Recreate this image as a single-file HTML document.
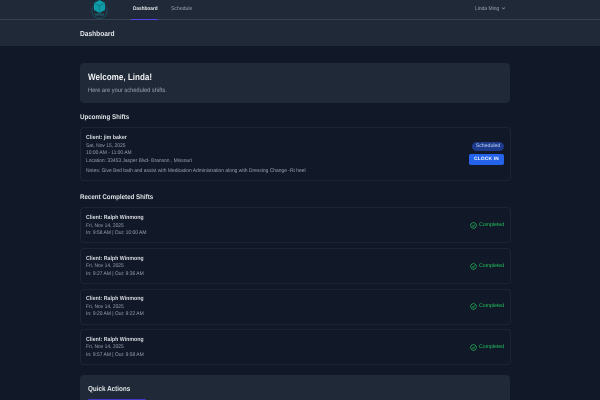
<!DOCTYPE html>
<html><head><meta charset="utf-8"><style>
html,body{margin:0;padding:0;width:600px;height:400px;overflow:hidden;background:#111827}
#p{position:absolute;left:0;top:0;width:600px;height:400px;overflow:hidden;background:#111827;font-family:"Liberation Sans",sans-serif;text-rendering:geometricPrecision}
#p div,#p span{position:absolute;white-space:nowrap}
.card{left:80px;width:429px;border:1px solid #1b2534;border-radius:4px;background:#111827}
.t,.s,.h,.x{transform-origin:left center}
.t{font-size:5.9px;font-weight:bold;color:#d8dce3;left:86px;transform:scaleX(.89)}
.s{font-size:5.3px;color:#98a1ae;left:86px;transform:scaleX(.93)}
.h{font-size:6.8px;font-weight:bold;color:#e2e5ea;left:80px;transform:scaleX(.91)}
.c{font-size:5.2px;color:#22c55e;left:479px}
</style></head><body><div id="p">
<div style="left:0;top:0;width:600px;height:46px;background:#1f2937"></div>
<div style="left:0;top:19px;width:600px;height:1px;background:#374151"></div>
<svg style="position:absolute;left:90px;top:0" width="20" height="20" viewBox="0 0 20 20">
<circle cx="9.5" cy="11" r="7.5" fill="none" stroke="#164e63" stroke-width="1"/>
<path d="M9.5 0L15 3V10L9.5 13L4 10V3Z" fill="#0e9aa7"/>
<path d="M4 3L9.5 6L15 3M9.5 6V13" fill="none" stroke="#0b6f7c" stroke-width=".6"/>
<rect x="5" y="13.5" width="9" height="2" fill="#1f5560"/>
</svg>
<div class="x" style="left:132.5px;top:6px;font-size:5.3px;font-weight:bold;color:#e5e7eb;transform:scaleX(.89)">Dashboard</div>
<div style="left:131px;top:19px;width:27px;height:1px;background:#4f46e5"></div>
<div class="x" style="left:171px;top:6px;font-size:5.4px;color:#9ca3af;transform:scaleX(.95)">Schedule</div>
<div class="x" style="left:475px;top:5.5px;font-size:5.4px;color:#9ca3af;transform:scaleX(.92)">Linda Ming</div>
<svg style="position:absolute;left:501px;top:6px" width="5" height="5" viewBox="0 0 5 5"><path d="M1 1.5L2.5 3L4 1.5" fill="none" stroke="#9ca3af" stroke-width=".6"/></svg>
<div class="x" style="left:80px;top:29px;font-size:7.2px;font-weight:bold;color:#e5e7eb;transform:scaleX(.92)">Dashboard</div>

<div style="left:80px;top:63px;width:430px;height:40px;background:#1f2937;border-radius:4px"></div>
<div class="x" style="left:88px;top:71.5px;font-size:9.2px;font-weight:bold;color:#f3f4f6;transform:scaleX(.88)">Welcome, Linda!</div>
<div class="x" style="left:88px;top:86.5px;font-size:6.2px;color:#9ca3af;transform:scaleX(.92)">Here are your scheduled shifts.</div>

<div class="h" style="top:113.5px">Upcoming Shifts</div>
<div class="card" style="top:127px;height:52px"></div>
<div class="t" style="top:135px">Client: jim baker</div>
<div class="s" style="top:142.5px">Sat, Nov 15, 2025</div>
<div class="s" style="top:149.5px">10:00 AM - 11:00 AM</div>
<div class="s" style="top:157.5px">Location: 33453 Jasper Blvd- Branson , Missouri</div>
<div class="s" style="top:167.5px">Notes: Give Bed bath and assist with Medication Administration along with Dressing Change -Rt heel</div>
<div style="left:472px;top:141.5px;width:32px;height:9px;border-radius:5px;background:#1e3a8a;color:#bfdbfe;font-size:5.2px;line-height:9.5px;text-align:center">Scheduled</div>
<div style="left:469px;top:154px;width:35px;height:11px;border-radius:2px;background:#2563eb;color:#fff;font-size:4.8px;font-weight:bold;line-height:11px;text-align:center;letter-spacing:.2px">CLOCK IN</div>

<div class="h" style="top:193.5px">Recent Completed Shifts</div>

<div class="card" style="top:207px;height:34px"></div>
<div class="t" style="top:215px">Client: Ralph Winmong</div>
<div class="s" style="top:222.5px">Fri, Nov 14, 2025</div>
<div class="s" style="top:230px">In: 9:58 AM | Out: 10:00 AM</div>
<div class="c" style="top:222px">Completed</div>
<svg style="position:absolute;left:470px;top:222px" width="7" height="7" viewBox="0 0 7 7"><circle cx="3.5" cy="3.5" r="2.8" fill="none" stroke="#22c55e" stroke-width=".6"/><path d="M2.2 3.6L3.2 4.6L4.9 2.6" fill="none" stroke="#22c55e" stroke-width=".6"/></svg>

<div class="card" style="top:248px;height:34px"></div>
<div class="t" style="top:255.5px">Client: Ralph Winmong</div>
<div class="s" style="top:263px">Fri, Nov 14, 2025</div>
<div class="s" style="top:270.5px">In: 9:27 AM | Out: 9:36 AM</div>
<div class="c" style="top:262.5px">Completed</div>
<svg style="position:absolute;left:470px;top:262.5px" width="7" height="7" viewBox="0 0 7 7"><circle cx="3.5" cy="3.5" r="2.8" fill="none" stroke="#22c55e" stroke-width=".6"/><path d="M2.2 3.6L3.2 4.6L4.9 2.6" fill="none" stroke="#22c55e" stroke-width=".6"/></svg>

<div class="card" style="top:288.5px;height:34px"></div>
<div class="t" style="top:296px">Client: Ralph Winmong</div>
<div class="s" style="top:303.5px">Fri, Nov 14, 2025</div>
<div class="s" style="top:311px">In: 9:20 AM | Out: 9:22 AM</div>
<div class="c" style="top:303px">Completed</div>
<svg style="position:absolute;left:470px;top:303px" width="7" height="7" viewBox="0 0 7 7"><circle cx="3.5" cy="3.5" r="2.8" fill="none" stroke="#22c55e" stroke-width=".6"/><path d="M2.2 3.6L3.2 4.6L4.9 2.6" fill="none" stroke="#22c55e" stroke-width=".6"/></svg>

<div class="card" style="top:329px;height:34px"></div>
<div class="t" style="top:336.5px">Client: Ralph Winmong</div>
<div class="s" style="top:344px">Fri, Nov 14, 2025</div>
<div class="s" style="top:351.5px">In: 9:57 AM | Out: 9:58 AM</div>
<div class="c" style="top:344px">Completed</div>
<svg style="position:absolute;left:470px;top:344px" width="7" height="7" viewBox="0 0 7 7"><circle cx="3.5" cy="3.5" r="2.8" fill="none" stroke="#22c55e" stroke-width=".6"/><path d="M2.2 3.6L3.2 4.6L4.9 2.6" fill="none" stroke="#22c55e" stroke-width=".6"/></svg>

<div style="left:80px;top:375px;width:430px;height:40px;background:#1f2937;border-radius:4px"></div>
<div class="x" style="left:88px;top:384px;font-size:7.2px;font-weight:bold;color:#e5e7eb;transform:scaleX(.88)">Quick Actions</div>
<div style="left:88px;top:398.5px;width:58px;height:6px;background:#4338ca;border-radius:1px"></div>
</div></body></html>
